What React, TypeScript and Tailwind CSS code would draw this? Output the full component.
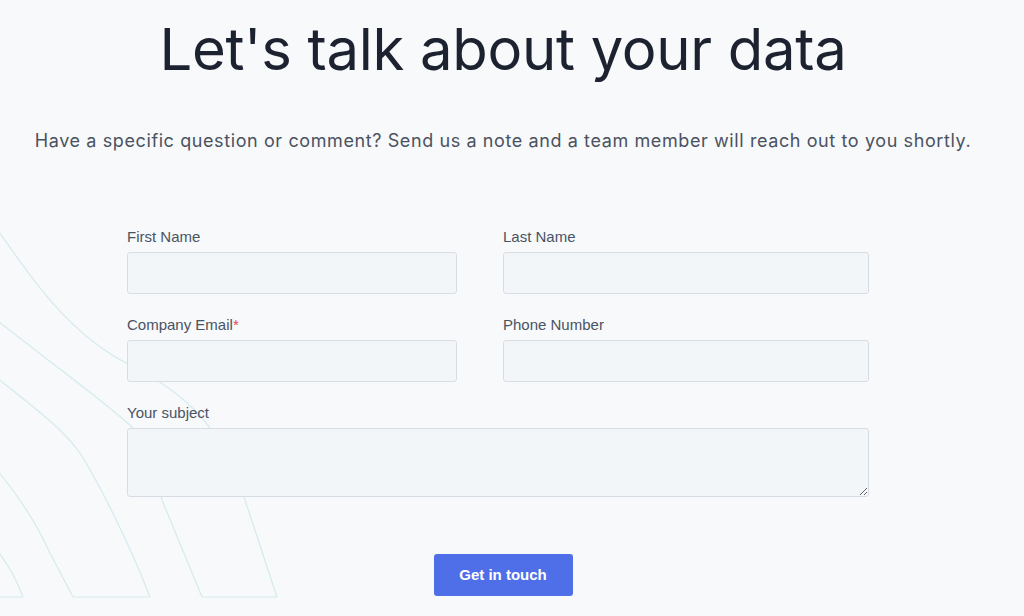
import React from "react";

const inter = { fontFamily: "Inter, 'Noto Sans', sans-serif" };

function Waves() {
  return (
    <svg
      className="absolute left-0 top-0 pointer-events-none"
      width="320"
      height="616"
      viewBox="0 0 320 616"
      fill="none"
      stroke="#d5eaee"
      strokeWidth="1.2"
    >
      <path d="M -15 212 C 20 260, 60 330, 130 365 C 200 400, 225 440, 245 500 L 277 597" />
      <path d="M -15 311 C 40 355, 90 390, 130 425 C 145 440, 155 470, 162 500 L 202 597" />
      <path d="M -15 368 C 30 405, 60 425, 80 453 C 100 485, 130 545, 150 597" />
      <path d="M -10 462 C 15 490, 35 520, 50 553 L 73 597" />
      <path d="M -5 548 C 5 560, 15 575, 23 597" />
      <path d="M 0 597 L 23 597 M 73 597 L 150 597 M 202 597 L 277 597" />
    </svg>
  );
}

function Field({
  label,
  required,
  className,
}: {
  label: string;
  required?: boolean;
  className?: string;
}) {
  return (
    <div className={className}>
      <label className="block text-[15px] leading-[20px] text-[#4a5363] mb-[5px]">
        {label}
        {required && <span className="text-[#e5484d]">*</span>}
      </label>
      <input
        type="text"
        className="block w-full h-[42px] bg-[#f3f6f9] border border-[#d7dde4] rounded-[3px] outline-none"
      />
    </div>
  );
}

export default function App() {
  return (
    <div
      className="relative min-h-[616px] bg-[#f7f9fb] overflow-hidden"
      style={{ fontFamily: "'Liberation Sans', Arial, sans-serif" }}
    >
      <Waves />

      <div className="relative w-[1006px] pt-[20px]">
        <h1
          className="text-center text-[58px] leading-[58px] font-normal text-[#1d2230] tracking-[-0.3px]"
          style={inter}
        >
          Let's talk about your data
        </h1>

        <p
          className="mt-[49px] text-center text-[18px] leading-[28px] text-[#4b5261] tracking-[0.6px]"
          style={inter}
        >
          Have a specific question or comment? Send us a note and a team member
          will reach out to you shortly.
        </p>

        <form className="mt-[72px] pl-[127px]">
          <div className="grid grid-cols-[330px_366px] gap-x-[46px] gap-y-[21px] w-[742px]">
            <Field label="First Name" />
            <Field label="Last Name" />
            <Field label="Company Email" required />
            <Field label="Phone Number" />
            <div className="col-span-2">
              <label className="block text-[15px] leading-[20px] text-[#4a5363] mb-[5px]">
                Your subject
              </label>
              <textarea className="block w-full h-[69px] bg-[#f3f6f9] border border-[#d7dde4] rounded-[3px] outline-none" />
            </div>
          </div>
        </form>

        <div className="flex justify-center mt-[57px]">
          <button className="w-[139px] h-[42px] rounded-[3px] bg-[#4f6fe9] text-white text-[15px] font-bold">
            Get in touch
          </button>
        </div>
      </div>
    </div>
  );
}
